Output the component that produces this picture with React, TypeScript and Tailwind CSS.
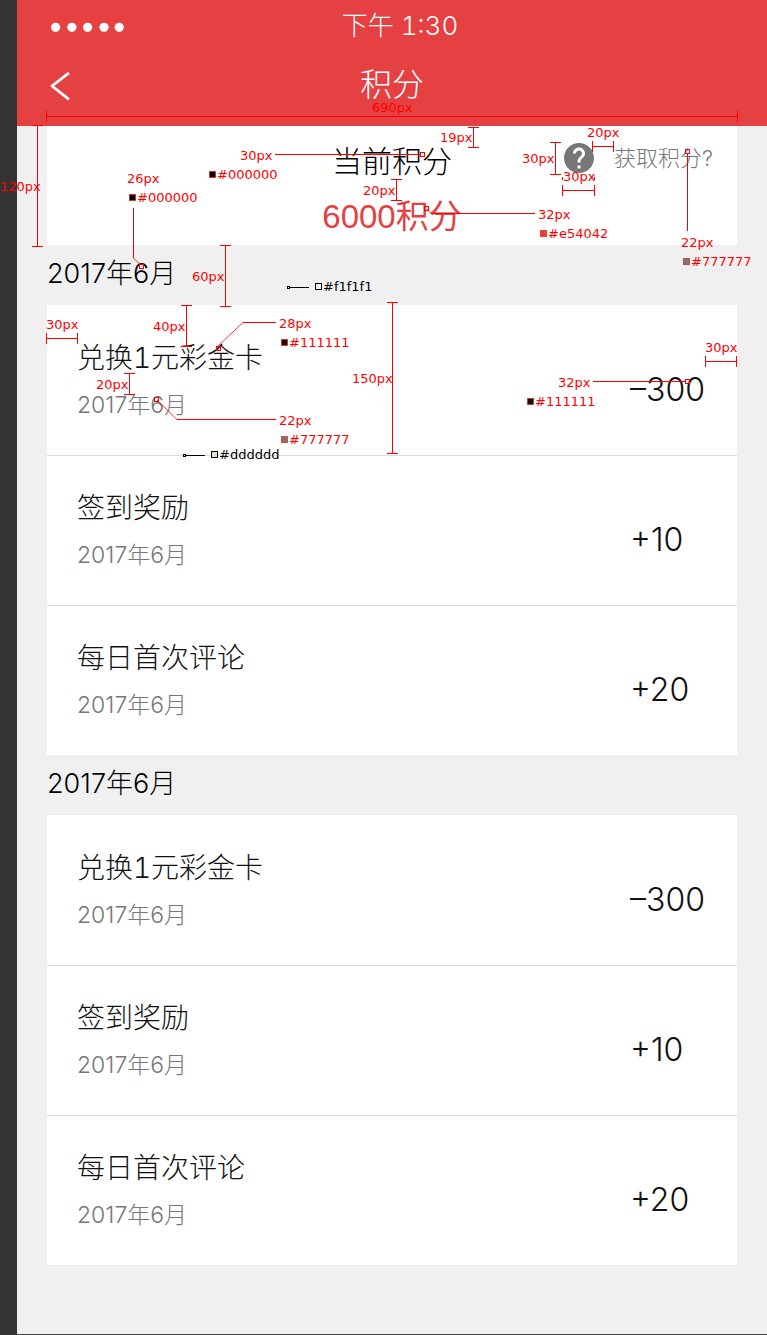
import React from "react";

type Entry = { title: string; date: string; amount: string };
type Month = { id: string; label: string; entries: Entry[] };

const entries: Entry[] = [
  { title: "兑换1元彩金卡", date: "2017年6月", amount: "–300" },
  { title: "签到奖励", date: "2017年6月", amount: "+10" },
  { title: "每日首次评论", date: "2017年6月", amount: "+20" },
];

const months: Month[] = [
  { id: "m1", label: "2017年6月", entries },
  { id: "m2", label: "2017年6月", entries },
];

function StatusBar() {
  return (
    <div className="relative flex h-[52px] items-center justify-center pl-4">
      <svg className="absolute left-[34px] top-[22px] h-[10px] w-[74px]" viewBox="0 0 74 10" fill="#fff" aria-hidden="true">
        <circle cx="4.6" cy="5.3" r="4.6" />
        <circle cx="20.9" cy="5.3" r="4.6" />
        <circle cx="36.6" cy="5.3" r="4.6" />
        <circle cx="53" cy="5.3" r="4.6" />
        <circle cx="68.2" cy="5.3" r="4.6" />
      </svg>
      <span className="text-[26px] leading-[36px] tabular-nums">下午 1:30</span>
    </div>
  );
}

function NavBar() {
  return (
    <div className="relative flex h-[74px] items-start justify-center pt-[13px]">
      <button type="button" aria-label="返回" className="absolute left-[30px] top-[16px] flex h-9 w-8 items-center justify-start pl-[3px]">
        <svg className="h-[28px] w-[20px]" viewBox="0 0 20 28" fill="none" stroke="#fff" strokeWidth="2.8" aria-hidden="true">
          <path d="M18 1.600 2 14l16 12.600" strokeLinecap="round" strokeLinejoin="round" />
        </svg>
      </button>
      <h1 className="text-[32px] leading-[40px]">积分</h1>
    </div>
  );
}

function HelpIcon() {
  return (
    <svg className="size-[30px] shrink-0" viewBox="2 2 20 20" fill="#777" aria-hidden="true">
      <path d="M12 2C6.48 2 2 6.48 2 12s4.48 10 10 10 10-4.48 10-10S17.52 2 12 2zm1 17h-2v-2h2v2zm2.07-7.75-.9.92C13.45 12.9 13 13.5 13 15h-2v-.5c0-1.1.45-2.1 1.17-2.83l1.24-1.26c.37-.36.59-.86.59-1.41 0-1.1-.9-2-2-2s-2 .9-2 2H8c0-2.21 1.79-4 4-4s4 1.79 4 4c0 .88-.36 1.68-.93 2.25z" />
    </svg>
  );
}

function Summary() {
  return (
    <section className="grid h-[119px] grid-cols-[1fr_auto_1fr] items-start bg-white">
      <div className="col-start-2 flex flex-col items-center gap-4 pt-[15px]">
        <h2 className="text-[30px] leading-[40px] text-black">当前积分</h2>
        <p className="font-['Liberation_Sans','Noto_Sans_CJK_SC',sans-serif] text-[33px] leading-[40px] font-normal text-[#e54042]">
          6000积分
        </p>
      </div>
      <a href="#earn" className="col-start-3 flex items-center justify-end gap-5 pt-[17px] pr-6 text-[22px] leading-[30px] text-[#777]">
        <HelpIcon />
        获取积分?
      </a>
    </section>
  );
}

function EntryRow({ entry }: { entry: Entry }) {
  return (
    <li className="flex h-[150px] items-start justify-between border-t border-[#ddd] px-[30px] first:border-t-transparent">
      <div className="flex flex-col gap-[17px] pt-[37px]">
        <h3 className="text-[28px] leading-[30px] text-[#111] tabular-nums">{entry.title}</h3>
        <p className="text-[23px] leading-[30px] text-[#777]">{entry.date}</p>
      </div>
      <span className="w-[77px] pt-[64px] text-[32px] leading-[40px] whitespace-nowrap text-[#111]">{entry.amount}</span>
    </li>
  );
}

function MonthSection({ month }: { month: Month }) {
  return (
    <section>
      <h2 className="flex h-[60px] items-center pb-[2px] text-[27px] leading-[40px] text-black">{month.label}</h2>
      <ul className="bg-white">
        {month.entries.map((entry) => (
          <EntryRow key={entry.title} entry={entry} />
        ))}
      </ul>
    </section>
  );
}

const notes = [
  { text: "690px", place: "left-[372px] top-[100px]" },
  { text: "120px", place: "left-0 top-[179px]" },
  { text: "30px", place: "left-[240px] top-[148px]" },
  { text: "#000000", place: "left-[217px] top-[167px]" },
  { text: "26px", place: "left-[127px] top-[171px]" },
  { text: "#000000", place: "left-[137px] top-[190px]" },
  { text: "19px", place: "left-[440px] top-[130px]" },
  { text: "20px", place: "left-[363px] top-[183px]" },
  { text: "30px", place: "left-[522px] top-[151px]" },
  { text: "20px", place: "left-[587px] top-[125px]" },
  { text: "30px", place: "left-[563px] top-[169px]" },
  { text: "32px", place: "left-[538px] top-[207px]" },
  { text: "#e54042", place: "left-[548px] top-[226px]" },
  { text: "22px", place: "left-[681px] top-[235px]" },
  { text: "#777777", place: "left-[691px] top-[254px]" },
  { text: "60px", place: "left-[192px] top-[269px]" },
  { text: "30px", place: "left-[46px] top-[317px]" },
  { text: "40px", place: "left-[153px] top-[319px]" },
  { text: "28px", place: "left-[279px] top-[316px]" },
  { text: "#111111", place: "left-[289px] top-[335px]" },
  { text: "20px", place: "left-[96px] top-[377px]" },
  { text: "22px", place: "left-[279px] top-[413px]" },
  { text: "#777777", place: "left-[289px] top-[432px]" },
  { text: "150px", place: "left-[352px] top-[371px]" },
  { text: "32px", place: "left-[558px] top-[375px]" },
  { text: "#111111", place: "left-[535px] top-[394px]" },
  { text: "30px", place: "left-[705px] top-[340px]" },
];

const darkNotes = [
  { text: "#f1f1f1", place: "left-[323px] top-[279px]" },
  { text: "#dddddd", place: "left-[219px] top-[447px]" },
];

const swatches = [
  { x: 209, y: 171, fill: "#000" },
  { x: 129, y: 194, fill: "#000" },
  { x: 540, y: 230, fill: "#e54042" },
  { x: 683, y: 258, fill: "#777" },
  { x: 281, y: 339, fill: "#111" },
  { x: 281, y: 436, fill: "#777" },
  { x: 527, y: 398, fill: "#111" },
];

const anchors = [
  [420, 152], [424, 206], [139, 264], [685, 149], [216, 346], [154, 397], [685, 379],
];

const measures = [
  "M46.5 111v11M46 116.5h692M737.5 111v11",
  "M32 125.5h11M37.5 125v122M32 246.5h11",
  "M468 127.5h11M473.5 127v21M468 147.5h11",
  "M391 179.5h11M396.5 179v22M391 200.5h11",
  "M550 142.5h11M555.5 142v33M550 174.5h11",
  "M592.5 141v11M592 146.5h22M613.5 141v11",
  "M562.5 185v11M562 190.5h33M594.5 185v11",
  "M562.5 177v3M594.5 177v3",
  "M220 245.5h11M225.5 245v62M220 306.5h11",
  "M46.5 333v11M46 338.5h32M77.5 333v11",
  "M181 305.5h11M186.5 305v42M181 346.5h11",
  "M124 373.5h11M129.5 373v22M124 394.5h11",
  "M387 302.5h11M392.5 302v152M387 453.5h11",
  "M705.5 356v11M705 361.5h32M736.5 356v11",
  "M275 154.5h145",
  "M133.5 208v50",
  "M432 213.5h103",
  "M687.5 154v77",
  "M243 322.5h33",
  "M177 419.5h99",
  "M593 381.5h92",
];

function Annotations() {
  return (
    <div className="pointer-events-none absolute inset-0 overflow-hidden font-['DejaVu_Sans',sans-serif] text-[13px] leading-[15px] font-normal">
      <svg className="absolute left-0 top-0 h-[480px] w-[767px]" viewBox="0 0 767 480" fill="none" stroke="#f00" aria-hidden="true">
        <path d={measures.join("")} shapeRendering="crispEdges" />
        <path d="M133.5 258l6 6M427 209l5 4.500M217 347l26-24.500M157 400l20 19.500" strokeWidth="0.8" />
        {anchors.map(([x, y]) => (
          <rect key={`${x}-${y}`} x={x + 0.5} y={y + 0.5} width="4" height="4" />
        ))}
        {swatches.map((s) => (
          <rect key={`${s.x}-${s.y}`} x={s.x + 0.5} y={s.y + 0.5} width="6" height="6" fill={s.fill} strokeOpacity="0.65" />
        ))}
        <g stroke="#000">
          <path d="M290 287.500h19M186 455.500h19" />
          <rect x="287.500" y="286.500" width="2" height="2" />
          <rect x="183.500" y="454.500" width="2" height="2" />
          <rect x="315.500" y="283.500" width="6" height="6" fill="#f1f1f1" />
          <rect x="211.500" y="451.500" width="6" height="6" fill="#ddd" />
        </g>
      </svg>
      {notes.map((n) => (
        <span key={n.place} className={`absolute whitespace-nowrap text-[#f00] ${n.place}`}>
          {n.text}
        </span>
      ))}
      {darkNotes.map((n) => (
        <span key={n.place} className={`absolute whitespace-nowrap text-black ${n.place}`}>
          {n.text}
        </span>
      ))}
    </div>
  );
}

export default function App() {
  return (
    <div className="relative flex min-h-screen bg-[#333] pl-[17px] font-['Inter','Noto_Sans_CJK_SC',sans-serif] font-light">
      <div className="flex-1 border-b border-[#444] bg-[#f0f0f0]">
        <header className="bg-[#e54042] text-white">
          <StatusBar />
          <NavBar />
        </header>
        <main className="mx-[30px] pb-[69px]">
          <Summary />
          {months.map((month) => (
            <MonthSection key={month.id} month={month} />
          ))}
        </main>
      </div>
      <Annotations />
    </div>
  );
}
